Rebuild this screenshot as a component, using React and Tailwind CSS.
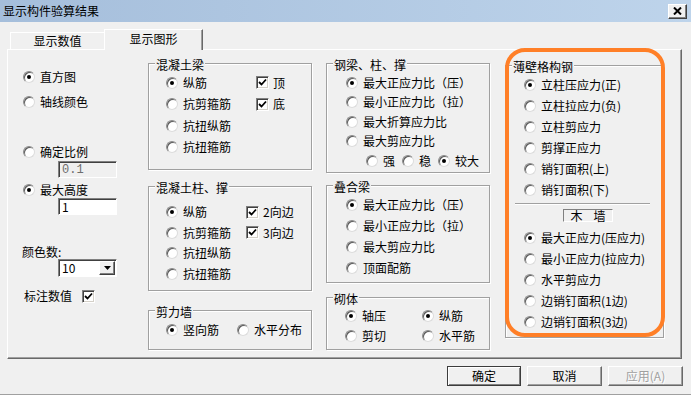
import clsx from 'clsx'

// classic win32 radio
function RadioDot({ checked }) {
  return (
    <span className="relative w-[12px] h-[12px] shrink-0 rounded-full bg-white border border-t-[#8a8a8a] border-l-[#8a8a8a] border-r-[#dcdcdc] border-b-[#dcdcdc] shadow-[inset_1px_1px_0_#5a5a5a] flex items-center justify-center">
      {checked && <span className="w-[4px] h-[4px] rounded-full bg-black" />}
    </span>
  )
}

function CheckBox({ checked }) {
  return (
    <span className="w-[13px] h-[13px] shrink-0 bg-white border border-t-[#808080] border-l-[#808080] border-r-white border-b-white shadow-[inset_1px_1px_0_#404040,inset_-1px_-1px_0_#d4d0c8] flex items-center justify-center">
      {checked && (
        <svg width="9" height="9" viewBox="0 0 9 9">
          <path d="M1 4 L3.5 6.5 L8 1.5" fill="none" stroke="#000" strokeWidth="1.8" />
        </svg>
      )}
    </span>
  )
}

function Radio({ checked, label, className }) {
  return (
    <div className={clsx('flex items-center', className)}>
      <RadioDot checked={checked} />
      <span className="ml-[5px] leading-[14px] whitespace-nowrap">{label}</span>
    </div>
  )
}

function Check({ checked, label, className }) {
  return (
    <div className={clsx('flex items-center', className)}>
      <CheckBox checked={checked} />
      <span className="ml-[4px] leading-[14px] whitespace-nowrap">{label}</span>
    </div>
  )
}

function Group({ title, className, children }) {
  return (
    <div className={clsx('border border-[#a0a0a0] shadow-[inset_1px_1px_0_#fff,1px_1px_0_#fff]', className)}>
      <div className="-mt-[6px] ml-[6px] w-fit px-[1px] h-[14px] leading-[14px] bg-[#f0f0f0] whitespace-nowrap">{title}</div>
      {children}
    </div>
  )
}

function Btn({ children, def, disabled, className }) {
  return (
    <button
      className={clsx(
        'h-[20px] flex items-center justify-center leading-[14px] bg-[#f0f0f0]',
        def
          ? 'border border-[#3c3c3c] shadow-[inset_1px_1px_0_#fff,inset_-1px_-1px_0_#808080]'
          : 'border border-t-white border-l-white border-r-[#696969] border-b-[#696969] shadow-[inset_-1px_-1px_0_#a0a0a0]',
        disabled && 'text-[#a0a0a0] [text-shadow:1px_1px_0_#fff]',
        className
      )}
    >
      {children}
    </button>
  )
}

export default function App() {
  return (
    <div className="w-[691px] h-[395px] bg-[#f0f0f0] flex flex-col overflow-hidden text-[12px] text-black border-b border-[#a0a0a0] font-['Noto_Sans_CJK_SC','Noto_Sans',sans-serif]">
      {/* title bar */}
      <div className="h-[22px] shrink-0 flex items-center justify-between pl-[3px] pr-[4px] bg-gradient-to-r from-[#a5bedb] to-[#bed4eb]">
        <span className="leading-[14px]">显示构件验算结果</span>
        <span className="w-[19px] h-[15px] bg-[#f0f0f0] border border-t-white border-l-white border-r-[#404040] border-b-[#404040] shadow-[inset_-1px_-1px_0_#808080] flex items-center justify-center">
          <svg width="9" height="8" viewBox="0 0 9 8">
            <path d="M1 0.5 L8 7.5 M8 0.5 L1 7.5" stroke="#000" strokeWidth="2" />
          </svg>
        </span>
      </div>

      {/* tabs */}
      <div className="h-[27px] shrink-0 flex items-end pl-[10px]">
        <div className="w-[94px] h-[17px] border-l border-t border-white flex items-center justify-center leading-[14px]">显示数值</div>
        <div className="relative z-10 -mb-[1px] w-[99px] h-[21px] bg-[#f0f0f0] border-l border-t border-white border-r border-r-[#696969] shadow-[inset_-1px_0_0_#a0a0a0] flex items-center justify-center pb-[3px] leading-[14px]">显示图形</div>
      </div>

      {/* tab pane */}
      <div className="ml-[7px] w-[675px] h-[310px] shrink-0 border border-t-white border-l-white border-r-[#696969] border-b-[#696969] shadow-[inset_-1px_-1px_0_#a0a0a0] flex items-start">
        {/* col 1 */}
        <div className="w-[140px] shrink-0 flex flex-col pt-[20px]">
          <Radio checked label="直方图" className="pl-[15px] h-[14px]" />
          <Radio label="轴线颜色" className="pl-[15px] h-[14px] mt-[11px]" />
          <Radio label="确定比例" className="pl-[15px] h-[14px] mt-[36px]" />
          <div className="ml-[50px] mt-[2px] w-[59px] h-[17px] bg-[#f0f0f0] border border-t-[#808080] border-l-[#808080] border-r-white border-b-white shadow-[inset_1px_1px_0_#404040] pl-[3px] flex items-center text-[#6d6d6d] leading-[14px] font-['Liberation_Mono',monospace]">0.1</div>
          <Radio checked label="最大高度" className="pl-[15px] h-[14px] mt-[5px]" />
          <div className="ml-[50px] mt-[1px] w-[59px] h-[17px] bg-white border border-t-[#808080] border-l-[#808080] border-r-white border-b-white shadow-[inset_1px_1px_0_#404040] pl-[3px] flex items-center leading-[14px]">1</div>
          <div className="ml-[14px] mt-[30px] h-[14px] leading-[14px]">颜色数:</div>
          <div className="ml-[50px] w-[59px] h-[18px] bg-white border border-t-[#808080] border-l-[#808080] border-r-white border-b-white shadow-[inset_1px_1px_0_#404040] pl-[3px] pr-[1px] flex items-center justify-between leading-[14px]">
            <span>10</span>
            <span className="w-[16px] h-[14px] bg-[#f0f0f0] border border-t-white border-l-white border-r-[#404040] border-b-[#404040] shadow-[inset_-1px_-1px_0_#808080] flex items-center justify-center">
              <svg width="7" height="4" viewBox="0 0 7 4"><path d="M0 0 H7 L3.5 4 Z" fill="#000" /></svg>
            </span>
          </div>
          <div className="ml-[16px] mt-[12px] h-[14px] flex items-center">
            <span className="leading-[14px]">标注数值</span>
            <span className="ml-[10px]"><CheckBox checked /></span>
          </div>
        </div>

        {/* col 2 */}
        <div className="w-[164px] shrink-0 flex flex-col pt-[13px]">
          <Group title="混凝土梁" className="h-[107px]">
            <div className="flex">
              <div className="w-[107px] pl-[17px] flex flex-col">
                <Radio checked label="纵筋" className="h-[21.5px]" />
                <Radio label="抗剪箍筋" className="h-[21.5px]" />
                <Radio label="抗扭纵筋" className="h-[21.5px]" />
                <Radio label="抗扭箍筋" className="h-[21.5px]" />
              </div>
              <div className="flex flex-col">
                <Check checked label="顶" className="h-[21.5px]" />
                <Check checked label="底" className="h-[21.5px]" />
              </div>
            </div>
          </Group>
          <Group title="混凝土柱、撑" className="h-[105px] mt-[16px]">
            <div className="flex pt-[7px]">
              <div className="w-[97px] pl-[17px] flex flex-col">
                <Radio checked label="纵筋" className="h-[20.5px]" />
                <Radio label="抗剪箍筋" className="h-[20.5px]" />
                <Radio label="抗扭纵筋" className="h-[20.5px]" />
                <Radio label="抗扭箍筋" className="h-[20.5px]" />
              </div>
              <div className="flex flex-col">
                <Check checked label="2向边" className="h-[20.5px]" />
                <Check checked label="3向边" className="h-[20.5px]" />
              </div>
            </div>
          </Group>
          <Group title="剪力墙" className="h-[40px] mt-[19px]">
            <div className="flex pt-[1px] pl-[17px]">
              <Radio checked label="竖向筋" className="h-[20px]" />
              <Radio label="水平分布" className="h-[20px] ml-[18px]" />
            </div>
          </Group>
        </div>

        {/* col 3 */}
        <div className="w-[164px] shrink-0 ml-[14px] flex flex-col pt-[13px]">
          <Group title="钢梁、柱、撑" className="h-[110px]">
            <div className="flex flex-col pt-[1px] pl-[19px]">
              <Radio checked label="最大正应力比（压）" className="h-[19.5px]" />
              <Radio label="最小正应力比（拉）" className="h-[19.5px]" />
              <Radio label="最大折算应力比" className="h-[19.5px]" />
              <Radio label="最大剪应力比" className="h-[19.5px]" />
              <div className="flex h-[19.5px] pl-[20px]">
                <Radio label="强" />
                <Radio label="稳" className="ml-[7px]" />
                <Radio checked label="较大" className="ml-[7px]" />
              </div>
            </div>
          </Group>
          <Group title="叠合梁" className="h-[98px] mt-[12px]">
            <div className="flex flex-col pl-[19px]">
              <Radio checked label="最大正应力比（压）" className="h-[21px]" />
              <Radio label="最小正应力比（拉）" className="h-[21px]" />
              <Radio label="最大剪应力比" className="h-[21px]" />
              <Radio label="顶面配筋" className="h-[21px]" />
            </div>
          </Group>
          <Group title="砌体" className="h-[53px] mt-[14px]">
            <div className="grid grid-cols-[77px_auto] pl-[18px]">
              <Radio checked label="轴压" className="h-[20px]" />
              <Radio checked label="纵筋" className="h-[20px]" />
              <Radio label="剪切" className="h-[20px]" />
              <Radio label="水平筋" className="h-[20px]" />
            </div>
          </Group>
        </div>

        {/* col 4 */}
        <div className="relative w-[159px] shrink-0 ml-[15px] flex flex-col pt-[15px]">
          <Group title="薄壁格构钢" className="h-[273px]">
            <div className="flex flex-col pl-[18px]">
              <Radio checked label="立柱压应力(正)" className="h-[21px]" />
              <Radio label="立柱拉应力(负)" className="h-[21px]" />
              <Radio label="立柱剪应力" className="h-[21px]" />
              <Radio label="剪撑正应力" className="h-[21px]" />
              <Radio label="销钉面积(上)" className="h-[21px]" />
              <Radio label="销钉面积(下)" className="h-[21px]" />
            </div>
            <div className="mt-[3px] ml-[9px] w-[135px] h-[2px] border-t border-[#a0a0a0] border-b border-b-white" />
            <div className="mt-[4px] ml-[57px] w-[50px] h-[13px] border border-t-[#808080] border-l-[#808080] border-r-white border-b-white flex items-center justify-center gap-[11px] leading-[12px]">
              <span>木</span>
              <span>墙</span>
            </div>
            <div className="mt-[5px] flex flex-col pl-[18px]">
              <Radio checked label="最大正应力(压应力)" className="h-[21px]" />
              <Radio label="最小正应力(拉应力)" className="h-[21px]" />
              <Radio label="水平剪应力" className="h-[21px]" />
              <Radio label="边销钉面积(1边)" className="h-[21px]" />
              <Radio label="边销钉面积(3边)" className="h-[21px]" />
            </div>
          </Group>
          {/* orange highlight annotation */}
          <div className="absolute left-0 -top-[2px] w-[160px] h-[289px] border-[4px] border-[#ff7f27] rounded-[20px] pointer-events-none" />
        </div>
      </div>

      {/* buttons */}
      <div className="mt-[7px] pl-[447px] flex gap-[6px]">
        <Btn def className="w-[74px]">确定</Btn>
        <Btn className="w-[75px]">取消</Btn>
        <Btn disabled className="w-[75px]">应用(A)</Btn>
      </div>
    </div>
  )
}
